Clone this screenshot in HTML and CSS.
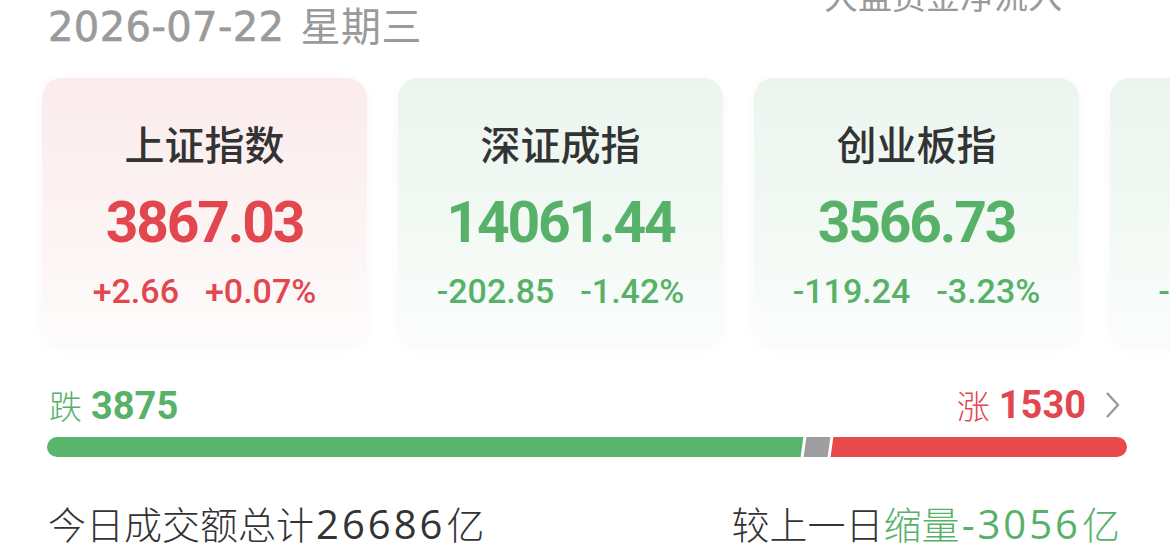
FILE: index.html
```html
<!DOCTYPE html>
<html lang="zh-CN">
<head>
    <meta charset="UTF-8">
    <meta name="viewport" content="width=device-width, initial-scale=1.0">
    <title>大盘概览</title>
    <link rel="stylesheet" href="styles.css">
</head>
<body>
    <div class="page">
        <div class="top-bar">
            <div class="date">2026-07-22 <span class="weekday">星期三</span></div>
            <div class="flow-link">大盘资金净流入</div>
        </div>

        <!-- Index cards -->
        <div class="index-row">
            <div class="index-card up">
                <div class="index-name">上证指数</div>
                <div class="index-price">3867.03</div>
                <div class="index-change">
                    <span>+2.66</span>
                    <span>+0.07%</span>
                </div>
            </div>
            <div class="index-card down">
                <div class="index-name">深证成指</div>
                <div class="index-price">14061.44</div>
                <div class="index-change">
                    <span>-202.85</span>
                    <span>-1.42%</span>
                </div>
            </div>
            <div class="index-card down">
                <div class="index-name">创业板指</div>
                <div class="index-price">3566.73</div>
                <div class="index-change">
                    <span>-119.24</span>
                    <span>-3.23%</span>
                </div>
            </div>
            <div class="index-card down">
                <div class="index-name">科创50</div>
                <div class="index-price">1032.18</div>
                <div class="index-change">
                    <span>-31.06</span>
                    <span>-2.92%</span>
                </div>
            </div>
        </div>

        <!-- Up / down breadth -->
        <div class="breadth">
            <div class="breadth-labels">
                <div class="fall"><span class="breadth-word">跌</span><span class="breadth-num">3875</span></div>
                <div class="rise">
                    <span class="breadth-word">涨</span><span class="breadth-num">1530</span>
                    <svg class="chevron" width="24" height="30" viewBox="0 0 24 30">
                        <path d="M7 3 L18 15 L7 27" fill="none" stroke="#9a9a9a" stroke-width="2.4" stroke-linejoin="round"/>
                    </svg>
                </div>
            </div>
            <div class="breadth-bar">
                <div class="seg seg-fall" style="flex-grow: 3875;"></div>
                <div class="seg seg-flat" style="flex-grow: 123;"></div>
                <div class="seg seg-rise" style="flex-grow: 1530;"></div>
            </div>
        </div>

        <!-- Turnover -->
        <div class="turnover">
            <div>今日成交额总计<span class="num">26686</span>亿</div>
            <div>较上一日<span class="green">缩量<span class="num">-3056</span>亿</span></div>
        </div>
    </div>
</body>
</html>
```

FILE: styles.css
```css
* {
    margin: 0;
    padding: 0;
    box-sizing: border-box;
}

body {
    font-family: 'Noto Sans CJK SC', sans-serif;
    background: #ffffff;
    color: #333333;
    overflow: hidden;
}

.page {
    width: 1170px;
    height: 553px;
    overflow: hidden;
}

.top-bar {
    display: flex;
    justify-content: space-between;
    align-items: flex-start;
    padding: 0 108px 0 48px;
    height: 78px;
}

.date {
    font-family: 'DejaVu Sans', 'Noto Sans CJK SC', sans-serif;
    font-size: 40px;
    line-height: 48px;
    color: #9a9a9a;
    letter-spacing: 0.4px;
    -webkit-text-stroke: 0.6px #9a9a9a;
}

.weekday {
    font-family: 'Noto Sans CJK SC', sans-serif;
    margin-left: 3px;
    -webkit-text-stroke: 0;
}

.flow-link {
    font-size: 34px;
    line-height: 34px;
    margin-top: -22px;
    color: #9a9a9a;
}

.index-row {
    display: flex;
    gap: 31px;
    padding-left: 42px;
}

.index-card {
    flex-shrink: 0;
    width: 325px;
    height: 266px;
    border-radius: 20px;
    padding-top: 37px;
    text-align: center;
    box-shadow: 0 4px 14px rgba(0, 0, 0, 0.03);
}

.index-card.up {
    background: linear-gradient(180deg, #fbebec 0%, #fdf6f6 70%, #fefcfc 100%);
    color: #e2474f;
}

.index-card.down {
    background: linear-gradient(180deg, #ebf5ee 0%, #f5faf7 70%, #fbfdfc 100%);
    color: #57b168;
}

.index-name {
    font-size: 40px;
    line-height: 56px;
    font-weight: 500;
    color: #333333;
}

.index-price {
    font-family: 'Roboto', sans-serif;
    font-size: 57px;
    line-height: 64px;
    font-weight: 700;
    letter-spacing: -2.2px;
    margin-top: 20px;
}

.index-change {
    display: flex;
    justify-content: center;
    gap: 26px;
    font-family: 'Roboto', sans-serif;
    font-size: 34px;
    line-height: 40px;
    font-weight: 500;
    margin-top: 16px;
}

.breadth {
    padding: 39px 43px 0 47px;
}

.breadth-labels {
    display: flex;
    justify-content: space-between;
    align-items: center;
    height: 44px;
}

.fall {
    color: #57b168;
    padding-left: 2px;
}

.rise {
    display: flex;
    align-items: center;
    color: #e2474f;
}

.breadth-word {
    font-size: 33px;
    line-height: 44px;
    font-weight: 300;
}

.breadth-num {
    font-family: 'Roboto', sans-serif;
    font-size: 38px;
    line-height: 44px;
    font-weight: 700;
    margin-left: 9px;
}

.chevron {
    margin-left: 14px;
    margin-right: 3px;
}

.breadth-bar {
    display: flex;
    gap: 3px;
    height: 20px;
    margin-top: 10px;
    border-radius: 10px;
    overflow: hidden;
}

.seg {
    flex-basis: 0;
    transform: skewX(-8deg);
}

.seg-fall {
    background: #58b56b;
    margin-left: -6px;
}

.seg-flat {
    background: #9e9e9e;
}

.seg-rise {
    background: #e84a4b;
    margin-right: -6px;
}

.turnover {
    display: flex;
    justify-content: space-between;
    padding: 0 50px 0 48px;
    margin-top: 41px;
    font-size: 38px;
    line-height: 50px;
    font-weight: 300;
    color: #333333;
}

.turnover .num {
    font-family: 'Open Sans', sans-serif;
    font-size: 40px;
    letter-spacing: 3px;
    font-weight: 400;
    margin: 0 1px 0 2px;
}

.green {
    color: #57b168;
}
```
